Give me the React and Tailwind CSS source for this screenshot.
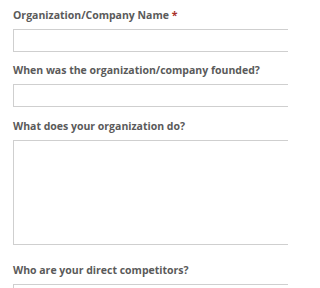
import React from 'react'

const fields = [
  { label: 'Organization/Company Name', required: true, box: 'h-[23px]', gap: 'mb-[11px]' },
  { label: 'When was the organization/company founded?', box: 'h-[23px]', gap: 'mb-[12px]' },
  { label: 'What does your organization do?', box: 'h-[105px]', gap: 'mb-[18px]', area: true },
  { label: 'Who are your direct competitors?', box: 'h-[23px]', gap: '' },
]

const App = () => {
  return (
    <div
      className="w-[288px] h-[288px] overflow-hidden bg-white pl-[13px] pt-[8px]"
      style={{ fontFamily: '"Open Sans", "Liberation Sans", sans-serif' }}
    >
      {fields.map((field, index) => (
        <div key={index} className={field.gap}>
          <label className="block text-[10.5px] leading-[14px] font-bold text-[#5a5a5a] whitespace-nowrap mb-[7px]">
            {field.label}
            {field.required && <span className="text-[#a8302a]"> *</span>}
          </label>
          {field.area ? (
            <textarea className={`block w-[300px] ${field.box} border border-[#cfcfcf] bg-white resize-none`} />
          ) : (
            <input type="text" className={`block w-[300px] ${field.box} border border-[#cfcfcf] bg-white`} />
          )}
        </div>
      ))}
    </div>
  )
}

export default App
